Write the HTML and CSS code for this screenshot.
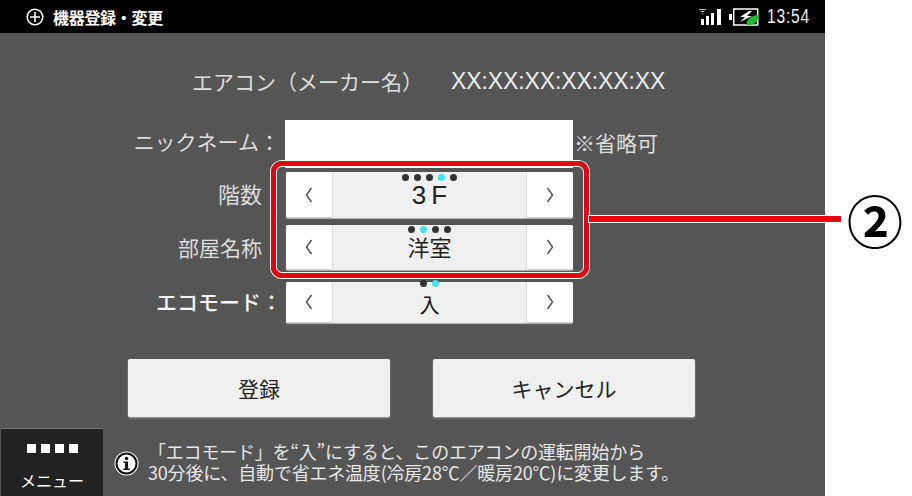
FILE: index.html
```html
<!DOCTYPE html>
<html lang="ja">
<head>
<meta charset="utf-8">
<title>機器登録・変更</title>
<link rel="stylesheet" href="styles.css">
</head>
<body>
<div class="stage">
  <div class="phone">
    <header class="status">
      <div class="status-left">
        <svg class="plus" width="18" height="18" viewBox="0 0 18 18"><circle cx="9" cy="9" r="7.8" fill="none" stroke="#fff" stroke-width="1.6"/><path d="M9 4v10M4 9h10" stroke="#fff" stroke-width="1.6"/></svg>
        <span class="status-title">機器登録・変更</span>
      </div>
      <div class="status-right">
        <svg width="27" height="18" viewBox="0 0 27 18"><g fill="#fff"><rect x="2" y="11" width="3" height="6"/><rect x="7" y="8" width="3" height="9"/><rect x="12" y="5" width="3" height="12"/><rect x="18" y="1" width="4" height="16"/></g><path d="M0 1.500h7M1.500 3.500h4M3 5.500h1" stroke="#bbb" stroke-width="1"/></svg>
        <svg width="30" height="18" viewBox="0 0 30 18"><rect x="0" y="6" width="3" height="6" fill="#fff"/><rect x="4.700" y="1" width="24" height="16" fill="none" stroke="#fff" stroke-width="1.500"/><path d="M20 3l-9 6h5l-5 5 12-6h-5l5-5z" fill="#fff"/><path d="M17.500 17c0-6 4-9 12-10.500 0 6-3 10.500-9 10.500z" fill="#1db92c"/></svg>
        <span class="clock">13:54</span>
      </div>
    </header>
    <main class="screen">
      <div class="device-line"><span>エアコン（メーカー名）</span><span class="mac">XX:XX:XX:XX:XX:XX</span></div>
      <div class="form">
        <label class="field-label label-nick">ニックネーム：</label>
        <div class="nick-row"><div class="nick-input"></div><span class="optional">※省略可</span></div>

        <label class="field-label label-floor">階数</label>
        <div class="selector sel-floor">
          <div class="arrow"><svg width="10" height="18" viewBox="0 0 10 18"><path d="M7.500 2L2.500 9l5 7" fill="none" stroke="#555" stroke-width="1.500"/></svg></div>
          <div class="value"><div class="dots"><i></i><i></i><i></i><i class="on"></i><i></i></div><span class="value-text latin">3F</span></div>
          <div class="arrow"><svg width="10" height="18" viewBox="0 0 10 18"><path d="M2.500 2l5 7-5 7" fill="none" stroke="#555" stroke-width="1.500"/></svg></div>
        </div>

        <label class="field-label label-room">部屋名称</label>
        <div class="selector sel-room">
          <div class="arrow"><svg width="10" height="18" viewBox="0 0 10 18"><path d="M7.500 2L2.500 9l5 7" fill="none" stroke="#555" stroke-width="1.500"/></svg></div>
          <div class="value"><div class="dots"><i></i><i class="on"></i><i></i><i></i></div><span class="value-text">洋室</span></div>
          <div class="arrow"><svg width="10" height="18" viewBox="0 0 10 18"><path d="M2.500 2l5 7-5 7" fill="none" stroke="#555" stroke-width="1.500"/></svg></div>
        </div>

        <label class="field-label label-eco">エコモード：</label>
        <div class="selector sel-eco">
          <div class="arrow"><svg width="10" height="18" viewBox="0 0 10 18"><path d="M7.500 2L2.500 9l5 7" fill="none" stroke="#555" stroke-width="1.500"/></svg></div>
          <div class="value"><div class="dots"><i></i><i class="on"></i></div><span class="value-text small">入</span></div>
          <div class="arrow"><svg width="10" height="18" viewBox="0 0 10 18"><path d="M2.500 2l5 7-5 7" fill="none" stroke="#555" stroke-width="1.500"/></svg></div>
        </div>
      </div>
      <div class="actions">
        <div class="btn">登録</div>
        <div class="btn">キャンセル</div>
      </div>
      <footer class="foot">
        <div class="menu">
          <div class="menu-squares"><i></i><i></i><i></i><i></i></div>
          <span class="menu-label">メニュー</span>
        </div>
        <svg class="info" width="25" height="25" viewBox="0 0 25 25"><circle cx="12.500" cy="12.500" r="12" fill="#fff"/><circle cx="12.500" cy="12.500" r="10" fill="#fff" stroke="#111" stroke-width="2"/><circle cx="12.500" cy="7.500" r="1.800" fill="#111"/><path d="M9.500 10.500h4.500v7h1.800v1.500H9.300v-1.500h1.800v-5.500H9.500z" fill="#111"/></svg>
        <p class="note">「エコモード」を“入”にすると、このエアコンの運転開始から<br>30分後に、自動で省エネ温度(冷房28℃／暖房20℃)に変更します。</p>
      </footer>
    </main>
  </div>
  <div class="callout-box"></div>
  <div class="callout-line"></div>
  <div class="callout-num">②</div>
</div>
</body>
</html>
```
FILE: styles.css
```css
* { box-sizing: border-box; }
html, body { margin: 0; padding: 0; background: #fff; }
body { font-family: "Noto Sans CJK JP", "Noto Sans", sans-serif; overflow: hidden; }
.stage { position: relative; width: 912px; height: 496px; }
.phone { width: 825px; height: 496px; display: flex; flex-direction: column; background: #555; }
.status { height: 33px; background: #000; display: flex; justify-content: space-between; align-items: center; padding: 0 16px 0 26px; color: #fff; flex: none; }
.status-left { display: flex; align-items: center; gap: 9px; }
.status-title { font-size: 16px; font-weight: 700; line-height: 20px; letter-spacing: -0.3px; }
.status-right { display: flex; align-items: center; gap: 3px; }
.clock { font-family: "Liberation Sans", sans-serif; font-size: 20px; letter-spacing: 1px; transform: scaleX(.78); transform-origin: left; width: 42px; margin-left: 5px; color: #eee; white-space: nowrap; }
.screen { flex: 1; display: flex; flex-direction: column; position: relative; }
.device-line { display: flex; padding-left: 192px; gap: 28px; margin-top: 35px; height: 26px; align-items: center; color: #ddd; font-size: 21px; line-height: 26px; white-space: nowrap; }
.mac { font-family: "Liberation Sans", sans-serif; font-size: 23px; letter-spacing: -0.1px; color: #eee; }
.form { display: grid; grid-template-columns: 285px 400px; grid-template-rows: 48px 46px 45px 41px; margin-top: 26px; }
.field-label { font-size: 21px; color: #ddd; display: flex; align-items: center; justify-content: flex-end; white-space: nowrap; }
.label-nick { margin-right: 5px; padding-bottom: 6px; }
.label-floor { padding-right: 23px; margin-top: 4px; font-size: 22px; height: 46px; padding-bottom: 4px; }
.label-room { padding-right: 23px; margin-top: 11px; height: 45px; padding-bottom: 2px; }
.label-eco { margin-right: 3px; font-weight: 500; margin-top: 23px; height: 41px; color: #f4f4f4; padding-bottom: 4px; }
.nick-row { display: flex; align-items: center; }
.nick-input { width: 288px; height: 48px; background: #fff; flex: none; }
.optional { font-size: 21px; color: #ddd; white-space: nowrap; margin-bottom: 5px; margin-left: 1px; }
.selector { display: flex; width: 287px; margin-left: 1px; position: relative; border-radius: 2px; background: #f0f0f0; box-shadow: 0 1px 1px #bbb; }
.sel-floor { height: 46px; margin-top: 4px; }
.sel-room { height: 45px; margin-top: 11px; }
.sel-eco { height: 41px; margin-top: 23px; }
.arrow { width: 46px; background: #fff; display: flex; align-items: center; justify-content: center; border-radius: 2px; border-bottom: 1px solid #ccc; }
.value { flex: 1; position: relative; display: flex; align-items: center; justify-content: center; border-left: 1px solid #ddd; border-right: 1px solid #ddd; }
.value-text { font-size: 22px; line-height: 30px; color: #222; margin-bottom: 4px; }
.value-text.latin { font-family: "Liberation Sans", sans-serif; font-size: 26px; letter-spacing: 5px; margin: 0 -5px 0 0; }
.value-text.small { font-size: 20px; color: #111; margin: 4px 0 0; }
.dots { position: absolute; top: 0; left: 0; right: 0; display: flex; justify-content: center; gap: 5px; }
.dots i { width: 7px; height: 7px; border-radius: 50%; background: #333; }
.dots i.on { background: #3ee6e6; }
.sel-floor .dots { top: 2px; }
.sel-room .dots { top: 1px; left: -1px; }
.sel-eco .dots { top: -2px; left: -1px; }
.actions { display: flex; gap: 43px; padding-left: 128px; margin-top: 59px; }
.btn { width: 262px; height: 58px; background: #f0f0f0; border-radius: 2px; box-shadow: 0 1px 2px #aaa; color: #222; font-size: 21px; display: flex; align-items: center; justify-content: center; }
.foot { display: flex; align-items: flex-start; margin-top: 11px; flex: 1; }
.menu { width: 102px; height: 69px; margin-left: 1px; background: #222; border-top: 1px solid #777; display: flex; flex-direction: column; align-items: center; flex: none; }
.menu-squares { display: flex; gap: 5px; margin-top: 15px; }
.menu-squares i { width: 9px; height: 9px; background: #fff; }
.menu-label { font-size: 16px; line-height: 20px; color: #fff; margin-top: 17px; }
.info { margin: 23px 0 0 11px; flex: none; }
.note { margin: 13px 0 0 9px; font-size: 18px; line-height: 21px; color: #e8e8e8; white-space: nowrap; letter-spacing: -0.2px; }
.callout-box { position: absolute; left: 271px; top: 161px; width: 318px; height: 117px; border: 5px solid #e60012; border-radius: 11px; outline: 1px solid #fff; outline-offset: -6px; box-shadow: 0 0 0 1px #fff; }
.callout-line { position: absolute; left: 589px; top: 216px; width: 252px; height: 6px; background: #e60012; box-shadow: 0 0 0 1px #fff; }
.callout-num { position: absolute; left: 845px; top: 189px; width: 60px; height: 60px; font-size: 56px; line-height: 60px; text-align: center; font-weight: 700; color: #000; }
```
